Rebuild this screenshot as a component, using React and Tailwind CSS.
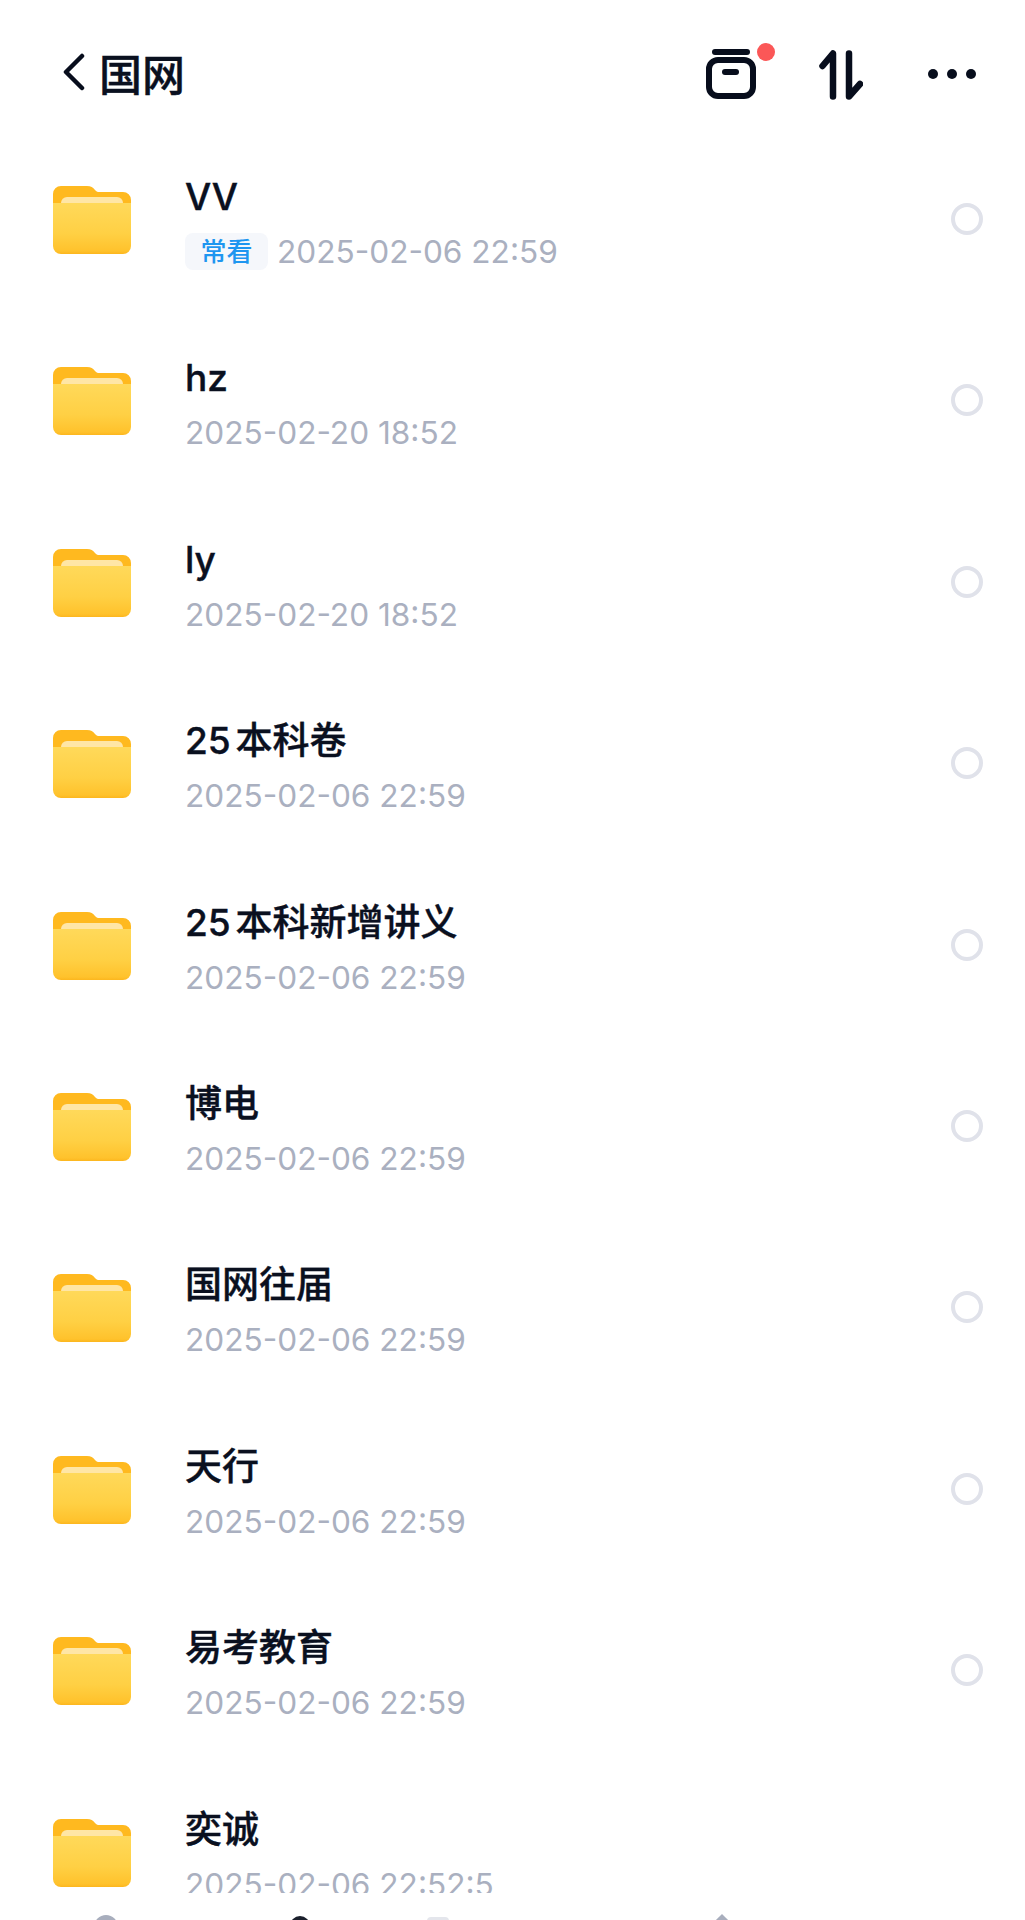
import { useId } from 'react';

const folders = [
  { name: 'VV', time: '2025-02-06 22:59', tag: '常看' },
  { name: 'hz', time: '2025-02-20 18:52' },
  { name: 'ly', time: '2025-02-20 18:52' },
  { name: '25 本科卷', time: '2025-02-06 22:59' },
  { name: '25 本科新增讲义', time: '2025-02-06 22:59' },
  { name: '博电', time: '2025-02-06 22:59' },
  { name: '国网往届', time: '2025-02-06 22:59' },
  { name: '天行', time: '2025-02-06 22:59' },
  { name: '易考教育', time: '2025-02-06 22:59' },
  { name: '奕诚', time: '2025-02-06 22:52:5', noRadio: true },
];

function FolderIcon() {
  const id = useId();
  return (
    <svg width="78" height="68" viewBox="0 0 78 68" className="shrink-0">
      <defs>
        <linearGradient id={id} x1="0" y1="0" x2="0" y2="1">
          <stop offset="0" stopColor="#ffd95a" />
          <stop offset="0.6" stopColor="#ffd044" />
          <stop offset="0.94" stopColor="#ffc22c" />
          <stop offset="1" stopColor="#fcb61e" />
        </linearGradient>
      </defs>
      <path d="M0 8a8 8 0 0 1 8-8h26c4 0 6 1.500 8 4 1.500 1.800 2.500 2 5 2h23a8 8 0 0 1 8 8v20H0z" fill="#ffb91f" />
      <path d="M8 17a6 6 0 0 1 6-6h50a6 6 0 0 1 6 6v4H8z" fill="#ffe6a6" />
      <path d="M0 17h78v43a8 8 0 0 1-8 8H8a8 8 0 0 1-8-8z" fill={`url(#${id})`} />
    </svg>
  );
}

function BoxIcon() {
  return (
    <svg width="50" height="50" viewBox="0 0 50 50" fill="none" stroke="#070d1c" strokeLinecap="round">
      <path d="M9 3h32" strokeWidth="6" />
      <rect x="3" y="11" width="44" height="36" rx="9" strokeWidth="6" />
      <path d="M19 23h11" strokeWidth="6" />
    </svg>
  );
}

function SortIcon() {
  return (
    <svg width="44" height="50" viewBox="0 0 44 50" fill="none" stroke="#070d1c" strokeWidth="6.500" strokeLinecap="round" strokeLinejoin="round">
      <path d="M3.500 16 14 3.500v43" />
      <path d="M30 3.500v43L41 34" />
    </svg>
  );
}

function Row({ name, time, tag, noRadio }) {
  return (
    <div className="flex h-[181.4px] shrink-0 items-center pl-[53px] pr-[42px]">
      <FolderIcon />
      <div className="ml-[54px] flex flex-1 flex-col pt-[7px]">
        <div className="text-[37px] leading-[44px] font-medium text-[#0a101f] [word-spacing:-5px] [-webkit-text-stroke:0.4px_#0a101f]">{name}</div>
        <div className="mt-[13px] flex items-center">
          {tag && (
            <span className="mr-[9px] flex h-[37px] w-[83px] items-center justify-center rounded-lg bg-[#f5f7fb] text-[26px] font-medium text-[#1e96f0]">
              {tag}
            </span>
          )}
          <span className="text-[31.6px] leading-[40px] text-[#aab0c0]">{time}</span>
        </div>
      </div>
      {!noRadio && <div className="-mt-[2px] h-[32px] w-[32px] rounded-full border-[4px] border-[#e0e2ea]" />}
    </div>
  );
}

export default function App() {
  return (
    <div
      className="flex h-[1920px] w-[1025px] flex-col overflow-hidden bg-white"
      style={{ fontFamily: 'Inter, "Noto Sans CJK SC", sans-serif' }}
    >
      <div className="flex h-[129.3px] shrink-0 items-start pt-[50px]">
        <svg width="24" height="38" viewBox="0 0 24 38" fill="none" stroke="#070d1c" strokeWidth="4.500" strokeLinecap="round" strokeLinejoin="round" className="ml-[62px] mt-[3px]">
          <path d="M20 3 4 19l16 16" />
        </svg>
        <span className="ml-[13px] text-[43px] leading-[50px] font-medium text-[#0a101f] [-webkit-text-stroke:0.4px_#0a101f]">国网</span>
        <div className="relative -mt-[1px] ml-auto">
          <BoxIcon />
          <span className="absolute left-[51px] top-[-6px] h-[18px] w-[18px] rounded-full bg-[#fb5757]" />
        </div>
        <div className="ml-[63px]">
          <SortIcon />
        </div>
        <div className="ml-[65px] mr-[49px] mt-[19px] flex gap-[9px]">
          <span className="h-[10px] w-[10px] rounded-full bg-[#070d1c]" />
          <span className="h-[10px] w-[10px] rounded-full bg-[#070d1c]" />
          <span className="h-[10px] w-[10px] rounded-full bg-[#070d1c]" />
        </div>
      </div>
      <div className="flex h-[1763.7px] shrink-0 flex-col overflow-hidden">
        {folders.map((f) => (
          <Row key={f.name} {...f} />
        ))}
      </div>
      {/* only the very top of the tab bar icons is visible */}
      <div className="relative flex-1 overflow-hidden">
        <span className="absolute left-[94px] top-[22px] h-[24px] w-[24px] rounded-full bg-[#a8aebd]" />
        <span className="absolute left-[290px] top-[23px] h-[20px] w-[20px] rounded-full bg-[#1a1f2c]" />
        <span className="absolute left-[427px] top-[24px] h-[8px] w-[22px] rounded-sm bg-[#e4e6ec]" />
        <span className="absolute left-[717px] top-[23px] h-[10px] w-[10px] rotate-45 bg-[#a8aebd]" />
      </div>
    </div>
  );
}
